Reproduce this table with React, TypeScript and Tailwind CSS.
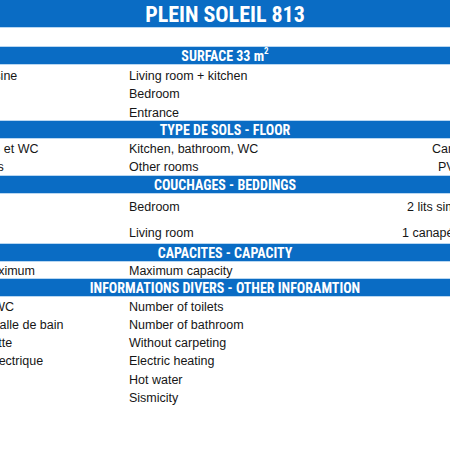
type Row = { fr: string; en: string; val?: string; pad?: string; h?: string; align?: string };

function Bar({ children, h = "h-[19px]" }: { children: React.ReactNode; h?: string }) {
  return (
    <div
      className={`${h} flex items-center justify-center border-y border-[#b9d7f1] bg-[#0a6cc4] font-['Roboto_Condensed',sans-serif] text-[14px] font-bold leading-none text-white`}
    >
      {children}
    </div>
  );
}

function Line({ r }: { r: Row }) {
  return (
    <div className={`grid grid-cols-[201px_273px_1fr] ${r.h ?? "h-[18px]"} ${r.align ?? "items-center pt-[1px]"}`}>
      <div className="whitespace-nowrap">{r.fr}</div>
      <div className="whitespace-nowrap">{r.en}</div>
      <div className={`whitespace-nowrap ${r.pad ?? ""}`}>{r.val}</div>
    </div>
  );
}

const surface: Row[] = [
  { fr: "Séjour + cuisine", en: "Living room + kitchen", align: "items-center pt-[2px]" },
  { fr: "Chambre", en: "Bedroom", h: "h-[19px]", align: "items-center pt-[2px]" },
  { fr: "Entrée", en: "Entrance", align: "items-center pt-[2px]" },
];

const floor: Row[] = [
  { fr: "Cuisine, SdB et WC", en: "Kitchen, bathroom, WC", val: "Carrelage", pad: "pl-[30px]" },
  { fr: "Autres pièces", en: "Other rooms", val: "PVC", pad: "pl-[36px]" },
];

const beds: Row[] = [
  { fr: "Chambre", en: "Bedroom", val: "2 lits simples", pad: "pl-[5px]", h: "h-[25px]" },
  { fr: "Séjour", en: "Living room", val: "1 canapé lit", h: "h-[24px]", align: "items-end pb-0" },
];

const capacity: Row[] = [{ fr: "Capacité maximum", en: "Maximum capacity", h: "h-[16px]", align: "items-center" }];

const other: Row[] = [
  { fr: "Nombre de WC", en: "Number of toilets" },
  { fr: "Nombre de salle de bain", en: "Number of bathroom" },
  { fr: "Sans moquette", en: "Without carpeting" },
  { fr: "Chauffage électrique", en: "Electric heating" },
  { fr: "Eau chaude", en: "Hot water", h: "h-[19px]", align: "items-center pt-[2px]" },
  { fr: "Sismicité", en: "Sismicity" },
];

export default function App() {
  return (
    <div className="h-[450px] w-[450px] overflow-hidden bg-white">
      <div className="-ml-[72px] w-[594px] font-['Liberation_Sans',Arial,sans-serif] text-[12.5px] text-[#161616]">
        <div className="flex h-[28px] items-center justify-center border-b border-[#b9d7f1] bg-[#0a6cc4] pt-[1px] font-['Roboto_Condensed',sans-serif] text-[22px] font-bold text-white">
          PLEIN SOLEIL 813
        </div>
        <div className="h-[18px]" />

        <Bar>
          SURFACE 33 m<sup className="text-[9px]">2</sup>
        </Bar>
        {surface.map((r) => (
          <Line key={r.en} r={r} />
        ))}

        <Bar>TYPE DE SOLS - FLOOR</Bar>
        {floor.map((r) => (
          <Line key={r.en} r={r} />
        ))}

        <Bar>COUCHAGES - BEDDINGS</Bar>
        {beds.map((r) => (
          <Line key={r.en} r={r} />
        ))}

        <Bar>CAPACITES - CAPACITY</Bar>
        {capacity.map((r) => (
          <Line key={r.en} r={r} />
        ))}

        <Bar>INFORMATIONS DIVERS - OTHER INFORAMTION</Bar>
        {other.map((r) => (
          <Line key={r.en} r={r} />
        ))}
      </div>
    </div>
  );
}
